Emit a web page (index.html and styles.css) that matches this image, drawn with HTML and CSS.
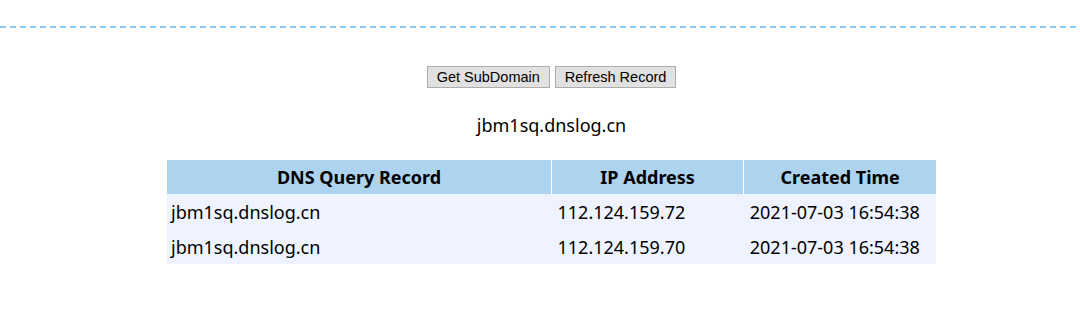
FILE: index.html
```html
<!DOCTYPE html>
<html lang="en">
<head>
    <meta charset="UTF-8">
    <title>DNSLog Platform</title>
    <link rel="stylesheet" href="styles.css">
</head>
<body>
<div class="top"></div>
<div class="container">
    <div class="actions">
        <button class="btn">Get SubDomain</button>
        <button class="btn">Refresh Record</button>
    </div>
    <div class="domain">jbm1sq.dnslog.cn</div>
    <table class="records">
        <thead>
        <tr>
            <th class="col-dns">DNS Query Record</th>
            <th class="col-ip">IP Address</th>
            <th class="col-time">Created Time</th>
        </tr>
        </thead>
        <tbody>
        <tr>
            <td>jbm1sq.dnslog.cn</td>
            <td>112.124.159.72</td>
            <td>2021-07-03 16:54:38</td>
        </tr>
        <tr>
            <td>jbm1sq.dnslog.cn</td>
            <td>112.124.159.70</td>
            <td>2021-07-03 16:54:38</td>
        </tr>
        </tbody>
    </table>
</div>
</body>
</html>
```

FILE: styles.css
```css
body {
    margin: 0;
    background: #fff;
    font-family: "Noto Sans", "Open Sans", sans-serif;
    color: #000;
}
.top {
    height: 26px;
    border-bottom: 2px solid transparent;
    background: repeating-linear-gradient(to right, #87cefa 0, #87cefa 6px, transparent 6px, transparent 10px) bottom / 100% 2px no-repeat border-box;
}
.container {
    padding-left: 23px;
    text-align: center;
}
.actions {
    padding-top: 38px;
    display: flex;
    justify-content: center;
    gap: 5px;
}
.btn {
    font-family: "Liberation Sans", Arial, sans-serif;
    font-size: 14.5px;
    height: 22px;
    padding: 0 9px;
    background: #e1e1e1;
    border: 1px solid #adadad;
    border-radius: 0;
    color: #000;
}
.domain {
    font-size: 18px;
    margin-top: 24px;
    line-height: 26px;
}
.records {
    width: 769px;
    margin: 22px auto 0;
    border-collapse: collapse;
    font-size: 18px;
    line-height: 24px;
}
.records th {
    background: #add3ee;
    font-weight: bold;
    height: 34px;
    padding: 0 5px;
    border-left: 1px solid #fff;
}
.records th:first-child {
    border-left: none;
}
.records td {
    background: #eef3ff;
    text-align: left;
    height: 35px;
    padding: 0 4px 0 6px;
}
.records td:first-child {
    padding-left: 4px;
}
.col-dns {
    width: 50%;
}
.col-ip, .col-time {
    width: 25%;
}
```
